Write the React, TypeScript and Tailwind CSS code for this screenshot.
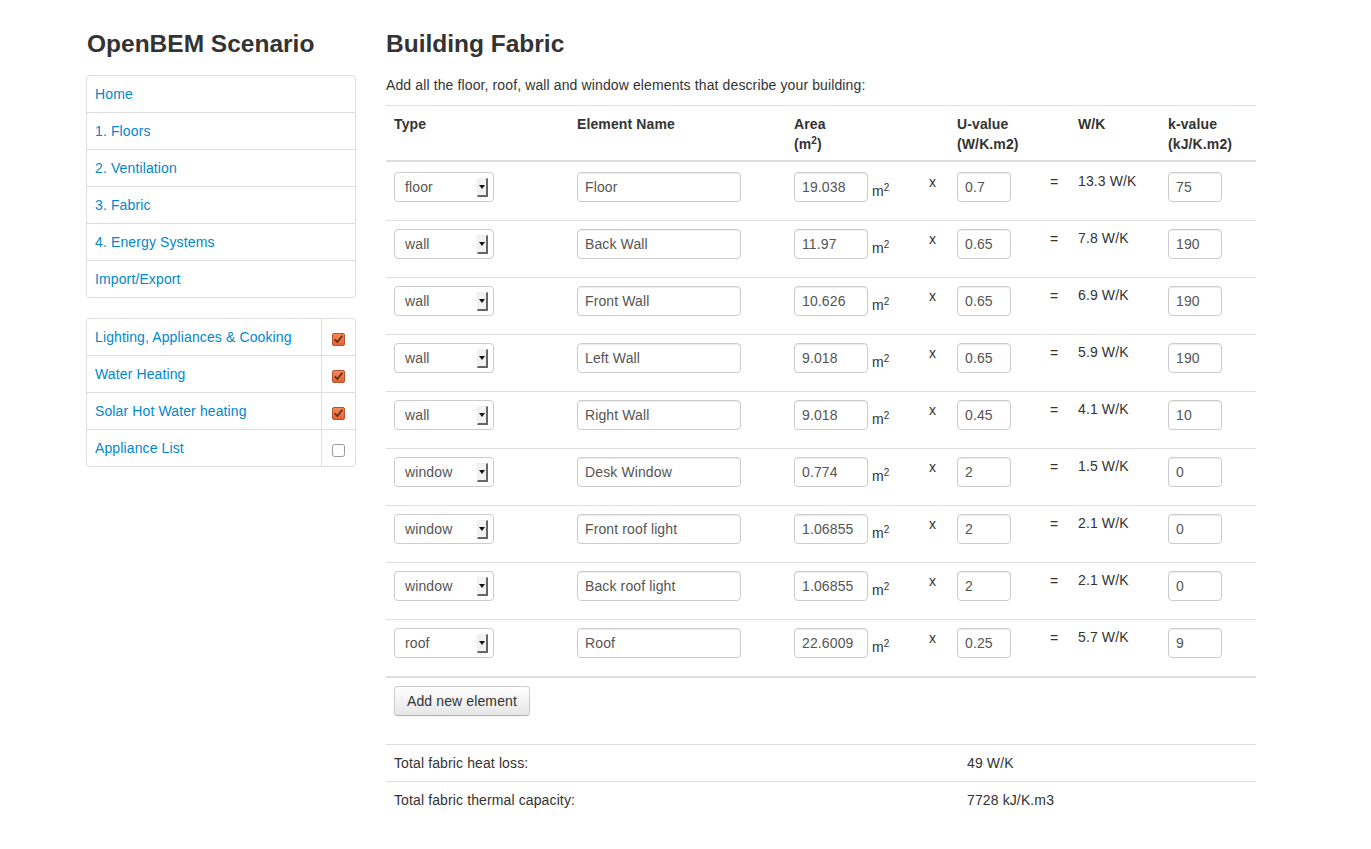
import React from "react";

const rows = [
  { type: "floor", name: "Floor", area: "19.038", u: "0.7", wk: "13.3 W/K", k: "75" },
  { type: "wall", name: "Back Wall", area: "11.97", u: "0.65", wk: "7.8 W/K", k: "190" },
  { type: "wall", name: "Front Wall", area: "10.626", u: "0.65", wk: "6.9 W/K", k: "190" },
  { type: "wall", name: "Left Wall", area: "9.018", u: "0.65", wk: "5.9 W/K", k: "190" },
  { type: "wall", name: "Right Wall", area: "9.018", u: "0.45", wk: "4.1 W/K", k: "10" },
  { type: "window", name: "Desk Window", area: "0.774", u: "2", wk: "1.5 W/K", k: "0" },
  { type: "window", name: "Front roof light", area: "1.06855", u: "2", wk: "2.1 W/K", k: "0" },
  { type: "window", name: "Back roof light", area: "1.06855", u: "2", wk: "2.1 W/K", k: "0" },
  { type: "roof", name: "Roof", area: "22.6009", u: "0.25", wk: "5.7 W/K", k: "9" },
];

function Input({ value, w }: { value: string; w: string }) {
  return (
    <div
      className={`${w} h-[30px] border border-[#cccccc] rounded-[4px] bg-white px-[7px] flex items-center text-[14px] text-[#555555] shadow-[inset_0_1px_1px_rgba(0,0,0,0.075)]`}
    >
      {value}
    </div>
  );
}

function Select({ value }: { value: string }) {
  return (
    <div className="w-[100px] h-[30px] border border-[#cccccc] rounded-[4px] bg-white pl-[10px] pr-[5px] flex items-center justify-between text-[14px] text-[#555555]">
      <span>{value}</span>
      <span className="w-[11px] h-[19px] border-r-2 border-b-2 border-r-[#666] border-b-[#666] border-t border-l border-t-[#eee] border-l-[#eee] bg-[#f2f2f2] flex items-center justify-center mt-[1px]">
        <svg width="6" height="4" viewBox="0 0 6 4">
          <path d="M0 0 L6 0 L3 4 Z" fill="#111" />
        </svg>
      </span>
    </div>
  );
}

function Check({ on }: { on: boolean }) {
  return on ? (
    <svg width="13" height="13" viewBox="0 0 13 13">
      <defs>
        <linearGradient id="cg" x1="0" y1="0" x2="0" y2="1">
          <stop offset="0" stopColor="#f58a5c" />
          <stop offset="1" stopColor="#e5602f" />
        </linearGradient>
      </defs>
      <rect x="0.5" y="0.5" width="12" height="12" rx="1.5" fill="url(#cg)" stroke="#b8532e" />
      <path d="M2.8 6.4 L5.3 9 L10.4 2.8" fill="none" stroke="#5b2a17" strokeWidth="1.7" />
    </svg>
  ) : (
    <svg width="13" height="13" viewBox="0 0 13 13">
      <rect x="0.5" y="0.5" width="12" height="12" rx="2" fill="#fff" stroke="#9a9a9a" />
    </svg>
  );
}

export default function App() {
  const nav = ["Home", "1. Floors", "2. Ventilation", "3. Fabric", "4. Energy Systems", "Import/Export"];
  const mods: [string, boolean][] = [
    ["Lighting, Appliances & Cooking", true],
    ["Water Heating", true],
    ["Solar Hot Water heating", true],
    ["Appliance List", false],
  ];
  return (
    <div
      className="min-h-[849px] bg-white text-[#333333] text-[14px] leading-[20px] tracking-[0.12px]"
      style={{ fontFamily: '"Liberation Sans", Arial, sans-serif' }}
    >
      <div className="flex pl-[86px] pt-[28px]">
        {/* Sidebar */}
        <div className="w-[270px] shrink-0">
          <h2 className="text-[24.5px] tracking-normal font-bold leading-[32px] h-[32px] ml-[1px] text-[#333]">OpenBEM Scenario</h2>
          <div className="mt-[15px] border border-[#dddddd] rounded-[4px]">
            {nav.map((n, i) => (
              <div
                key={n}
                className={`flex items-center pl-[8px] text-[#0088cc] ${i > 0 ? "h-[37px] border-t border-[#dddddd]" : "h-[36px]"}`}
              >
                {n}
              </div>
            ))}
          </div>
          <div className="mt-[20px] border border-[#dddddd] rounded-[4px]">
            {mods.map(([n, on], i) => (
              <div key={n} className={`flex ${i > 0 ? "h-[37px] border-t border-[#dddddd]" : "h-[36px]"}`}>
                <div className="flex-1 pl-[8px] pt-[8px] text-[#0088cc]">{n}</div>
                <div className="w-[34px] border-l border-[#dddddd] flex items-center justify-center pt-[5px]">
                  <Check on={on} />
                </div>
              </div>
            ))}
          </div>
        </div>

        {/* Main */}
        <div className="ml-[30px] w-[870px]">
          <h3 className="text-[24.5px] tracking-normal font-bold leading-[32px] h-[32px] text-[#333]">Building Fabric</h3>
          <p className="mt-[15px] h-[20px]">Add all the floor, roof, wall and window elements that describe your building:</p>
          <table className="mt-[10px] w-[870px] border-collapse table-fixed">
            <colgroup>
              <col className="w-[183px]" />
              <col className="w-[217px]" />
              <col className="w-[135px]" />
              <col className="w-[28px]" />
              <col className="w-[93px]" />
              <col className="w-[28px]" />
              <col className="w-[90px]" />
              <col className="w-[96px]" />
            </colgroup>
            <thead>
              <tr className="border-t border-[#dddddd] border-b-2 border-b-[#dddddd] align-top text-left">
                <th className="px-[8px] pt-[8px] h-[55px] font-bold">Type</th>
                <th className="px-[8px] pt-[8px] font-bold">Element Name</th>
                <th className="px-[8px] pt-[8px] font-bold">
                  Area
                  <br />
                  (m<sup className="text-[10px] leading-none">2</sup>)
                </th>
                <th></th>
                <th className="px-[8px] pt-[8px] font-bold">
                  U-value
                  <br />
                  (W/K.m2)
                </th>
                <th></th>
                <th className="px-[8px] pt-[8px] font-bold">W/K</th>
                <th className="px-[8px] pt-[8px] font-bold">
                  k-value
                  <br />
                  (kJ/K.m2)
                </th>
              </tr>
            </thead>
            <tbody>
              {rows.map((r, i) => {
                const first = i === 0;
                const pin = first ? "pt-[10px]" : "pt-[8px]";
                const pxe = first ? "pt-[10px]" : "pt-[8px]";
                const pwk = first ? "pt-[9px]" : "pt-[7px]";
                return (
                  <tr
                    key={i}
                    className={`align-top ${i > 0 ? "border-t border-[#dddddd]" : ""} ${i === rows.length - 1 ? "border-b-2 border-b-[#dddddd]" : ""}`}
                  >
                    <td className={`px-[8px] ${pin} ${first ? "h-[60px]" : "h-[57px]"}`}>
                      <Select value={r.type} />
                    </td>
                    <td className={`px-[8px] ${pin}`}>
                      <Input value={r.name} w="w-[164px]" />
                    </td>
                    <td className={`px-[8px] ${pin}`}>
                      <div className="flex items-end">
                        <Input value={r.area} w="w-[74px]" />
                        <span className="ml-[4px] mb-[1px]">
                          m<sup className="text-[10px]">2</sup>
                        </span>
                      </div>
                    </td>
                    <td className={`${pxe} pl-[8px]`}>x</td>
                    <td className={`px-[8px] ${pin}`}>
                      <Input value={r.u} w="w-[54px]" />
                    </td>
                    <td className={`${pxe} pl-[8px]`}>=</td>
                    <td className={`px-[8px] ${pwk}`}>{r.wk}</td>
                    <td className={`px-[8px] ${pin}`}>
                      <Input value={r.k} w="w-[54px]" />
                    </td>
                  </tr>
                );
              })}
            </tbody>
          </table>
          <div className="pl-[8px] pt-[8px] h-[66px]">
            <button className="h-[30px] px-[12px] rounded-[4px] border border-[#cccccc] border-b-[#b3b3b3] bg-gradient-to-b from-white to-[#e6e6e6] text-[14px] text-[#333] shadow-[0_1px_2px_rgba(0,0,0,0.05)]">
              Add new element
            </button>
          </div>
          <div className="border-t border-[#dddddd] h-[37px] flex pt-[8px]">
            <div className="w-[573px] pl-[8px]">Total fabric heat loss:</div>
            <div className="pl-[8px]">49 W/K</div>
          </div>
          <div className="border-t border-[#dddddd] h-[37px] flex pt-[8px]">
            <div className="w-[573px] pl-[8px]">Total fabric thermal capacity:</div>
            <div className="pl-[8px]">7728 kJ/K.m3</div>
          </div>
        </div>
      </div>
    </div>
  );
}
